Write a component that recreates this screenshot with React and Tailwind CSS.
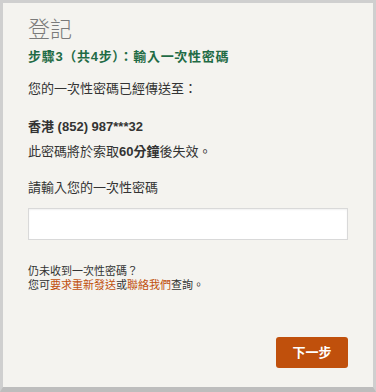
export default function App() {
  return (
    <div
      className="w-[376px] h-[392px] bg-[#f4f3ef] border-[3px] border-[#cfcfcf] border-b-[5px] border-b-[#bdbdbd] px-[25px] pt-[14px] text-[#333333]"
      style={{ fontFamily: '"Liberation Sans", "Noto Sans CJK TC", Arial, sans-serif' }}
    >
      <h1 className="text-[22px] leading-[26px] text-[#7a7a7a] font-light">登記</h1>
      <p className="mt-[5px] text-[13px] leading-[18px] font-bold text-[#1f6b45] tracking-[0.7px]">
        步驟3（共4步）：輸入一次性密碼
      </p>
      <p className="mt-[14px] text-[13px] leading-[18px]">您的一次性密碼已經傳送至：</p>
      <p className="mt-[20px] text-[13px] leading-[18px] font-bold">香港 (852) 987***32</p>
      <p className="mt-[7px] text-[13px] leading-[18px]">
        此密碼將於索取<span className="font-bold">60分鐘</span>後失效。
      </p>
      <p className="mt-[18px] text-[13px] leading-[18px]">請輸入您的一次性密碼</p>
      <input
        type="text"
        className="mt-[11px] block w-[320px] h-[32px] bg-white border border-[#d9d9d9] shadow-[inset_0_1px_2px_rgba(0,0,0,0.06)] outline-none"
      />
      <div className="mt-[24px] text-[11px] leading-[14px]">
        <p>仍未收到一次性密碼？</p>
        <p>
          您可<span className="text-[#c0500c]">要求重新發送</span>或
          <span className="text-[#c0500c]">聯絡我們</span>查詢。
        </p>
      </div>
      <div className="mt-[45px] flex justify-end">
        <button className="w-[72px] h-[31px] rounded-[3px] bg-[#c0500c] text-white text-[13px] font-bold">
          下一步
        </button>
      </div>
    </div>
  );
}
